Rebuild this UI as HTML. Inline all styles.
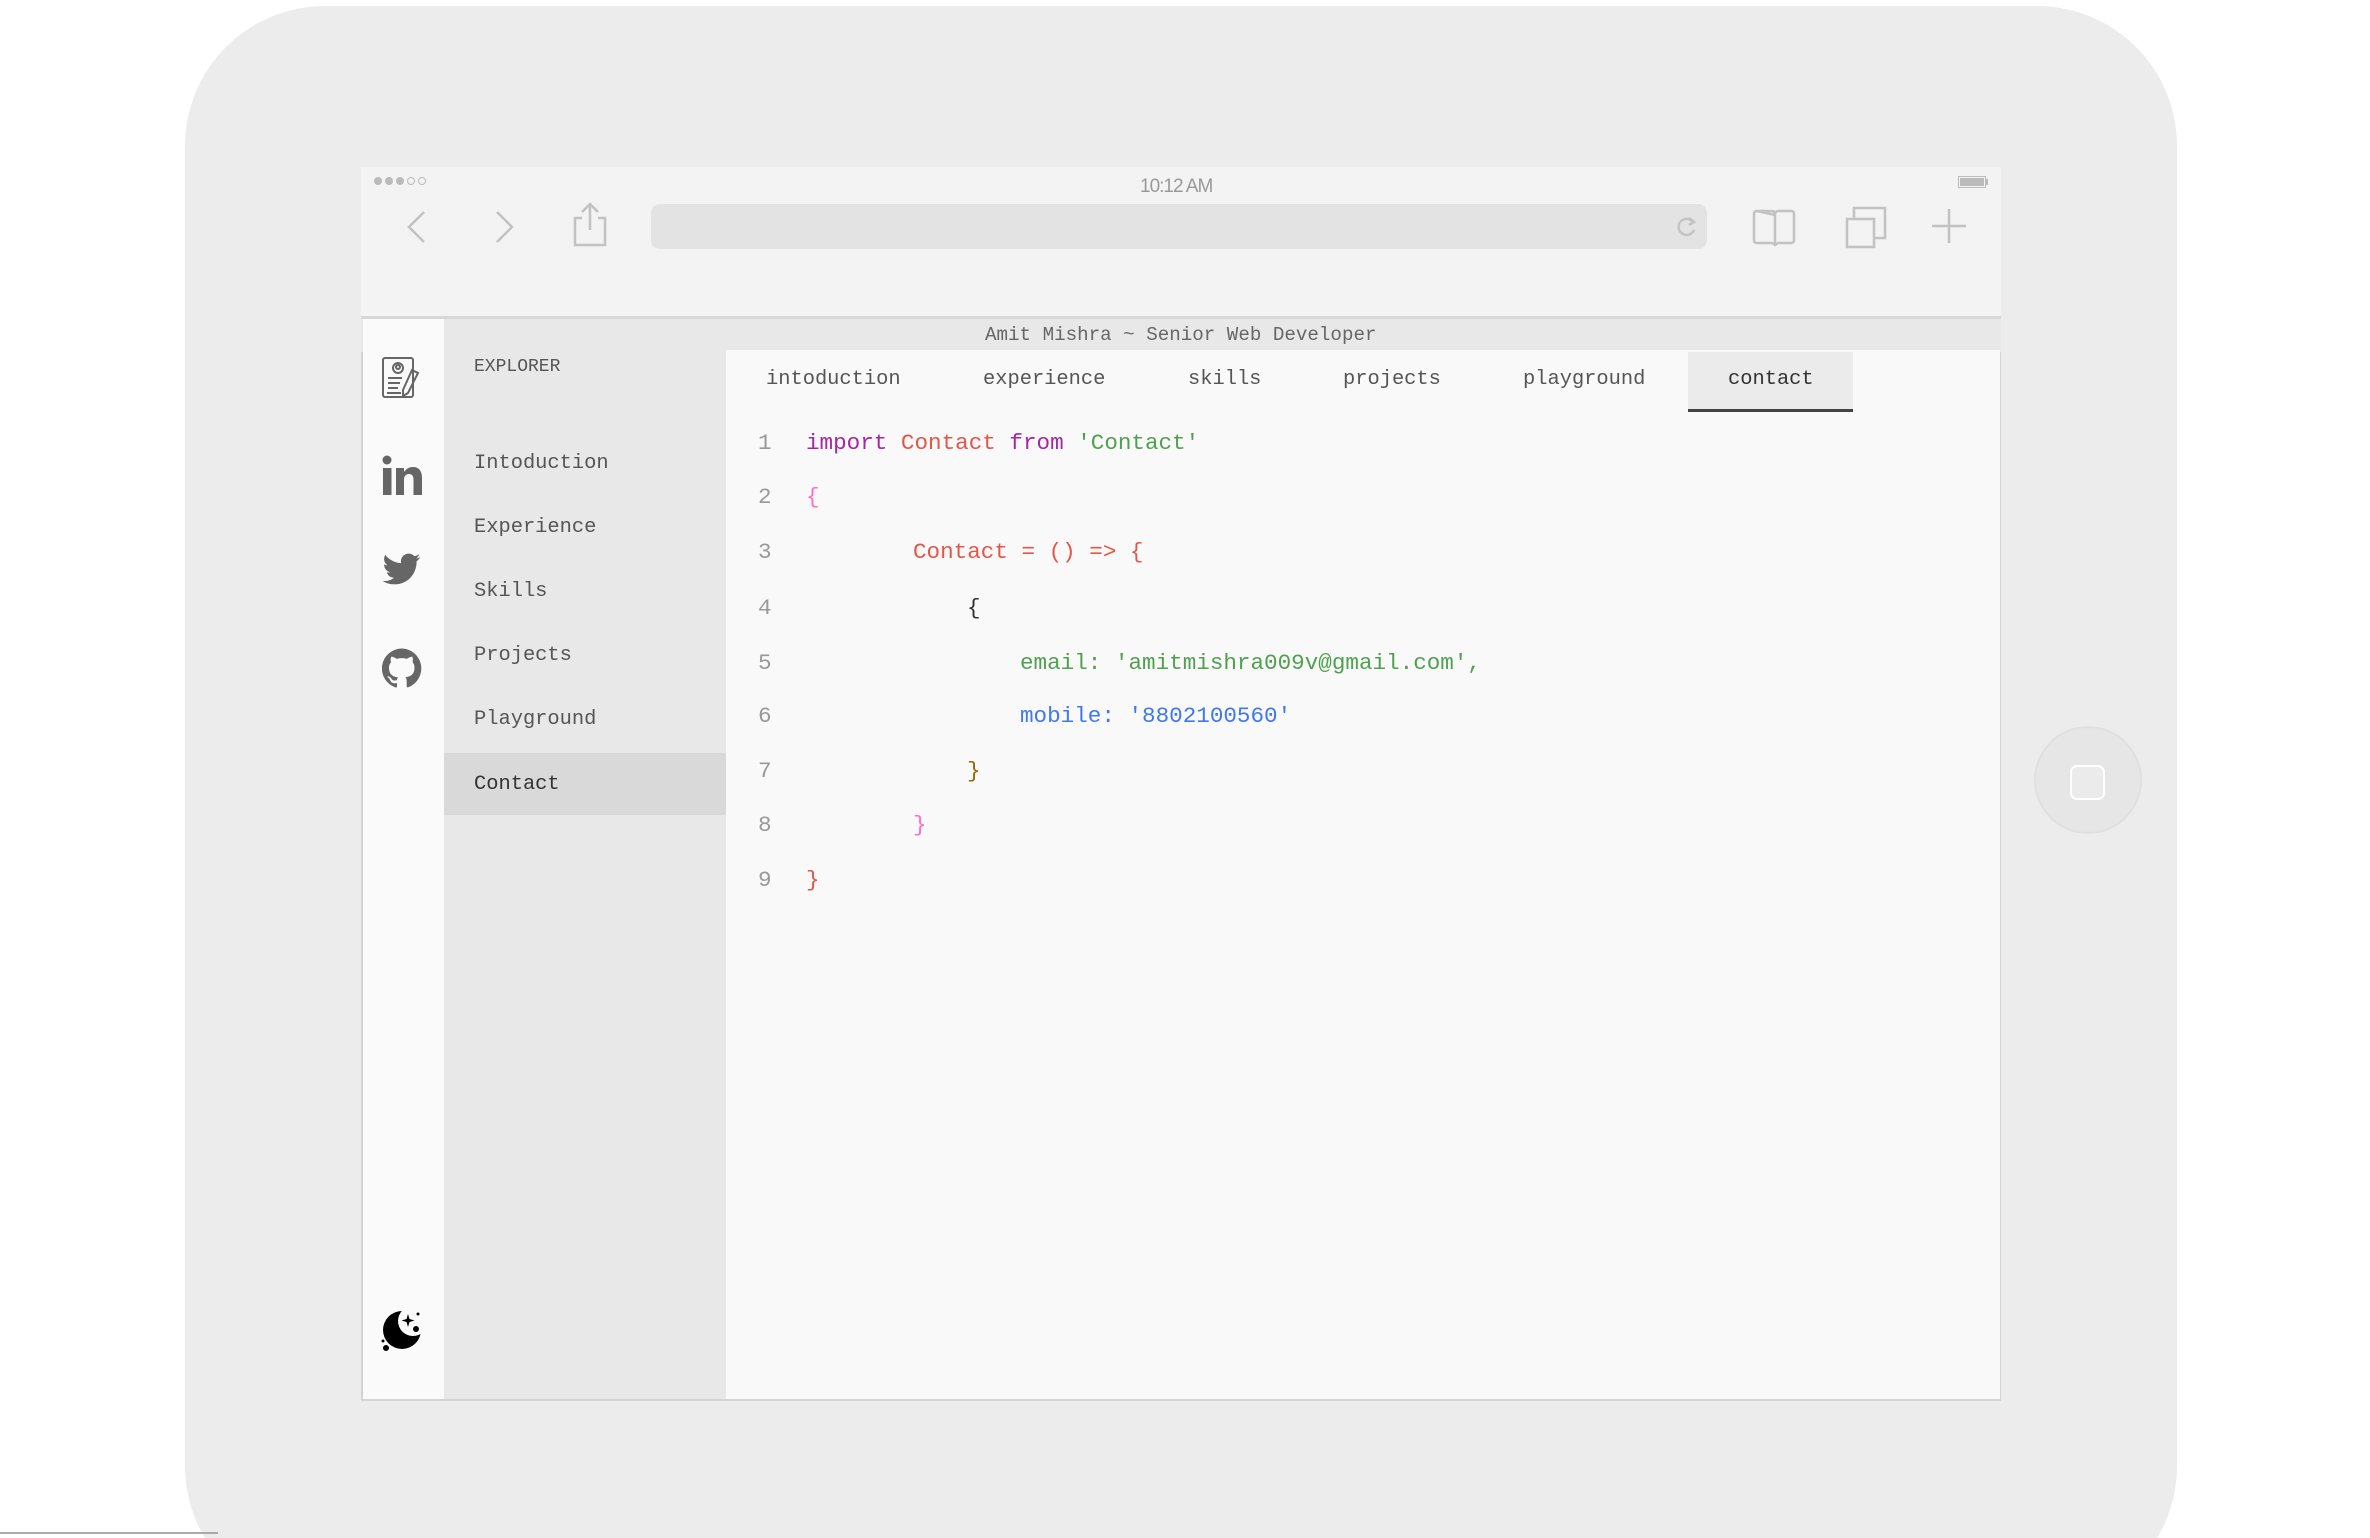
<!DOCTYPE html>
<html><head><meta charset="utf-8"><style>
*{margin:0;padding:0;box-sizing:border-box}
html,body{width:2370px;height:1538px;overflow:hidden;background:#fff;position:relative;font-family:"Liberation Mono",monospace}
.abs{position:absolute}
#device{left:185px;top:6px;width:1992px;height:1600px;background:#ececec;border-radius:140px}
#screen{left:361px;top:167px;width:1640px;height:1234px;background:#f9f9f9;border:2px solid #d4d4d4;border-top:none}
#chrome{left:361px;top:167px;width:1640px;height:152px;background:#f3f3f3;border-bottom:3px solid #d8d8d8}
.t{position:absolute;white-space:pre;line-height:1}
#titlebar{left:361px;top:319px;width:1640px;height:33px;background:#e8e8e8}
#act{left:363px;top:319px;width:81px;height:1080px;background:#fafafa}
#exp{left:444px;top:319px;width:282px;height:1080px;background:#e8e8e8}
#editor{left:726px;top:350px;width:1274px;height:1049px;background:#f9f9f9}
.side{font-size:20.4px;color:#555;left:474px}
.tab{font-size:20.4px;color:#555;top:370px}
.code{font-size:22.6px;left:806px}
.ln{font-size:22.6px;left:758px;color:#999}
</style></head><body>
<div id="device" class="abs"></div>
<div class="abs" style="left:0;top:1532px;width:218px;height:2px;background:#aaa"></div>
<div class="abs" style="left:2034px;top:726px;width:108px;height:108px;border-radius:50%;background:#e6e6e6;border:2px solid #e0e0e0"></div>
<div class="abs" style="left:2070px;top:765px;width:35px;height:35px;border-radius:7px;border:2px solid #fff;background:#ebebeb"></div>
<div id="screen" class="abs"></div>
<div id="chrome" class="abs"></div>
<div class="abs" style="left:374px;top:177px;width:8px;height:8px;border-radius:50%;background:#bbb"></div>
<div class="abs" style="left:385px;top:177px;width:8px;height:8px;border-radius:50%;background:#bbb"></div>
<div class="abs" style="left:396px;top:177px;width:8px;height:8px;border-radius:50%;background:#bbb"></div>
<div class="abs" style="left:407px;top:177px;width:8px;height:8px;border-radius:50%;border:1.5px solid #bbb"></div>
<div class="abs" style="left:418px;top:177px;width:8px;height:8px;border-radius:50%;border:1.5px solid #bbb"></div>
<div class="t" style="left:1140px;top:177px;font-family:'Liberation Sans',sans-serif;font-size:19px;color:#999;letter-spacing:-1px">10:12 AM</div>
<div class="abs" style="left:1958px;top:176px;width:28px;height:12px;border:1.5px solid #bbb;padding:1px"><div style="width:100%;height:100%;background:#bbb"></div></div>
<div class="abs" style="left:1986px;top:179px;width:2px;height:6px;background:#bbb"></div>
<svg class="abs" style="left:0;top:0" width="2370" height="320" fill="none" stroke="#c2c2c2" stroke-width="2.5">
<path d="M424 212 L409 227 L424 242"/>
<path d="M497 212 L512 227 L497 242"/>
<path d="M582 218 H575 V245 H605 V218 H598 M590 230 V204 M582 212 L590 204 L598 212"/>
<path d="M1757 211 H1772 Q1775 211 1775 215 V245 M1775 215 Q1775 211 1778 211 H1791 Q1794 211 1794 214 V240 Q1794 243 1791 243 H1778 L1775 245 L1772 243 H1757 Q1754 243 1754 240 V214 Q1754 211 1757 211 Z"/>
<path d="M1847 219 H1874 V247 H1847 Z M1854 219 V208 H1885 V238 H1874"/>
<path d="M1949 209 V243 M1932 226 H1966"/>
</svg>
<div class="abs" style="left:651px;top:204px;width:1056px;height:45px;background:#e3e3e3;border-radius:9px"></div>
<svg class="abs" style="left:1674px;top:214px" width="26" height="26" fill="none" stroke="#c4c4c4" stroke-width="2.5"><path d="M19 8 A8 8 0 1 0 20 16"/><path d="M15 4 L20 8 L15 11"/></svg>
<div id="titlebar" class="abs"></div>
<div class="t" style="left:985px;top:326px;font-size:19.2px;color:#666">Amit Mishra ~ Senior Web Developer</div>
<div id="act" class="abs"></div>
<div id="exp" class="abs"></div>
<div id="editor" class="abs"></div>
<svg class="abs" style="left:380px;top:356px" width="46" height="46" fill="none" stroke="#666" stroke-width="2">
<rect x="3" y="2" width="30" height="39" rx="2"/>
<circle cx="18" cy="12" r="5"/><circle cx="18" cy="11" r="2"/>
<path d="M8 22 h14 M8 27 h12 M8 32 h10 M7 37 h14"/>
<path d="M32 14 l6 3 l-10 20 l-5 3 l0-6 z"/>
</svg>
<svg class="abs" style="left:382px;top:455px" width="40" height="40" fill="#666">
<circle cx="5" cy="5" r="4.5"/><rect x="1" y="13" width="8.5" height="27"/>
<path d="M14 13 h8 v4 c2-3 5-5 9-5 c6 0 9 4 9 11 v17 h-8.5 v-15 c0-4-1.5-6-4.5-6 s-5 2-5 6 v15 h-8 z"/>
</svg>
<svg class="abs" style="left:381px;top:550px" width="42" height="38" viewBox="0 0 24 24" fill="#666"><path d="M23.6 4.6c-.9.4-1.8.6-2.8.8 1-.6 1.8-1.6 2.1-2.7-.9.6-2 1-3.1 1.2-.9-1-2.2-1.6-3.6-1.6-2.7 0-4.9 2.2-4.9 4.9 0 .4 0 .8.1 1.1C7.4 8.1 3.8 6.1 1.4 3.1c-.4.7-.7 1.6-.7 2.5 0 1.7.9 3.2 2.2 4.1-.8 0-1.6-.2-2.2-.6v.1c0 2.4 1.7 4.4 3.9 4.8-.4.1-.8.2-1.3.2-.3 0-.6 0-.9-.1.6 2 2.4 3.4 4.6 3.4-1.7 1.3-3.8 2.1-6.1 2.1-.4 0-.8 0-1.2-.1 2.2 1.4 4.8 2.2 7.5 2.2 9.1 0 14-7.5 14-14v-.6c1-.7 1.8-1.6 2.4-2.5z"/></svg>
<svg class="abs" style="left:382px;top:648px" width="40" height="40" viewBox="0 0 24 24" fill="#666"><path d="M12 .3a12 12 0 0 0-3.8 23.4c.6.1.8-.3.8-.6v-2c-3.3.7-4-1.6-4-1.6-.6-1.4-1.4-1.8-1.4-1.8-1-.7.1-.7.1-.7 1.2.1 1.8 1.2 1.8 1.2 1 1.8 2.8 1.3 3.5 1 0-.8.4-1.3.7-1.6-2.7-.3-5.5-1.3-5.5-6 0-1.2.5-2.3 1.3-3.1-.2-.4-.6-1.6 0-3.2 0 0 1-.3 3.4 1.2a11.5 11.5 0 0 1 6 0c2.3-1.5 3.3-1.2 3.3-1.2.6 1.6.2 2.8.1 3.2.8.8 1.2 1.9 1.2 3.1 0 4.6-2.8 5.6-5.5 5.9.5.4.8 1.1.8 2.2v3.3c0 .3.2.7.8.6A12 12 0 0 0 12 .3"/></svg>
<svg class="abs" style="left:378px;top:1303px" width="50" height="50">
<circle cx="24" cy="27" r="19" fill="#000"/>
<circle cx="35" cy="18" r="15" fill="#fafafa"/>
<g fill="#000">
<path d="M30 11 l1.5 5 l5 1.5 l-5 1.5 l-1.5 5 l-1.5-5 l-5-1.5 l5-1.5 z"/>
<circle cx="40" cy="11" r="1.5"/><circle cx="38" cy="26" r="3"/><circle cx="5" cy="38" r="1.5"/><circle cx="8" cy="45" r="3"/>
</g>
</svg>
<div class="t" style="left:474px;top:358px;font-size:18px;color:#555">EXPLORER</div>
<div class="abs" style="left:444px;top:753px;width:282px;height:62px;background:#d9d9d9"></div>
<div class="t side" style="top:454px">Intoduction</div>
<div class="t side" style="top:518px">Experience</div>
<div class="t side" style="top:582px">Skills</div>
<div class="t side" style="top:646px">Projects</div>
<div class="t side" style="top:710px">Playground</div>
<div class="t side" style="top:775px;color:#333">Contact</div>
<div class="abs" style="left:1688px;top:352px;width:165px;height:60px;background:#ebebeb;border-bottom:3px solid #444"></div>
<div class="t tab" style="left:766px">intoduction</div>
<div class="t tab" style="left:983px">experience</div>
<div class="t tab" style="left:1188px">skills</div>
<div class="t tab" style="left:1343px">projects</div>
<div class="t tab" style="left:1523px">playground</div>
<div class="t tab" style="left:1728px;color:#333">contact</div>
<div class="t ln" style="top:432px">1</div>
<div class="t ln" style="top:486px">2</div>
<div class="t ln" style="top:541px">3</div>
<div class="t ln" style="top:597px">4</div>
<div class="t ln" style="top:652px">5</div>
<div class="t ln" style="top:705px">6</div>
<div class="t ln" style="top:760px">7</div>
<div class="t ln" style="top:814px">8</div>
<div class="t ln" style="top:869px">9</div>
<div class="t code" style="top:432px"><span style="color:#a626a4">import</span> <span style="color:#e45649">Contact</span> <span style="color:#a626a4">from</span> <span style="color:#50a14f">'Contact'</span></div>
<div class="t code" style="top:486px;color:#ff6ec7">{</div>
<div class="t code" style="top:541px;left:913px;color:#e45649">Contact = () =&gt; {</div>
<div class="t code" style="top:597px;left:967px;color:#333">{</div>
<div class="t code" style="top:652px;left:1020px;color:#50a14f">email: 'amitmishra009v@gmail.com',</div>
<div class="t code" style="top:705px;left:1020px;color:#4078f2">mobile: '8802100560'</div>
<div class="t code" style="top:760px;left:967px;color:#986801">}</div>
<div class="t code" style="top:814px;left:913px;color:#ff6ec7">}</div>
<div class="t code" style="top:869px;color:#e45649">}</div>
</body></html>
